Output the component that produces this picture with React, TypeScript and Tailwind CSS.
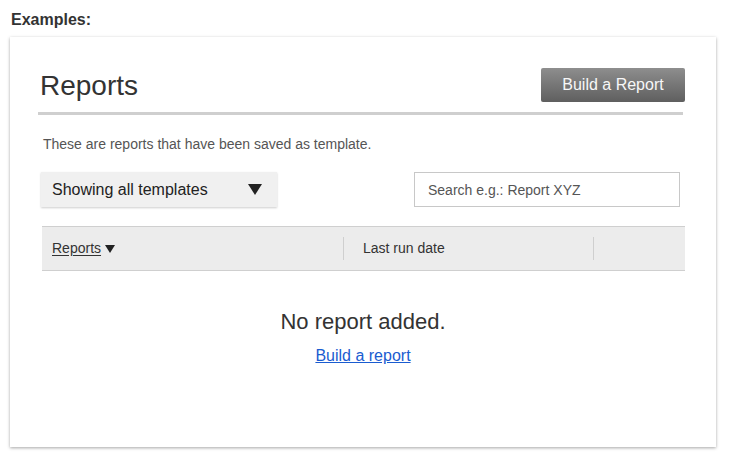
import React from "react";

export default function App() {
  return (
    <div
      className="w-[734px] h-[461px] bg-white px-[10px] pt-[11px] text-[#333]"
      style={{ fontFamily: '"Liberation Sans", Arial, sans-serif' }}
    >
      <div className="ml-[1px] text-[16px] leading-[18px] font-bold text-[#333]">Examples:</div>
      <div className="mt-[8px] w-[706px] h-[410px] bg-white shadow-[0_1px_3px_rgba(0,0,0,0.35)] px-[31px] pt-[31px]">
        <div className="flex items-start justify-between">
          <h1 className="-ml-[1px] text-[28px] leading-[35px] font-normal text-[#333]">Reports</h1>
          <button className="w-[144px] h-[34px] rounded-[2px] bg-gradient-to-b from-[#8e8e8e] to-[#5f5f5f] text-[16px] text-[#f7f7f7]">
            Build a Report
          </button>
        </div>
        <div className="mt-[9px] -ml-[3px] w-[645px] h-[3px] bg-[#cfcfcf]" />
        <p className="mt-[21px] ml-[2px] text-[14px] leading-[17px] text-[#555]">
          These are reports that have been saved as template.
        </p>
        <div className="mt-[19px] flex items-start justify-between">
          <div className="w-[236px] h-[35px] bg-[#f0f0f0] shadow-[0_1px_2px_rgba(0,0,0,0.2)] flex items-center justify-between pl-[11px] pr-[15px]">
            <span className="text-[16px] text-[#222]">Showing all templates</span>
            <svg width="14" height="11" viewBox="0 0 14 11">
              <polygon points="0,0 14,0 7,11" fill="#222" />
            </svg>
          </div>
          <input
            className="mr-[5px] w-[266px] h-[35px] border border-[#c8c8c8] bg-white pl-[13px] text-[14px] text-[#333] placeholder:text-[#555] outline-none"
            placeholder="Search e.g.: Report XYZ"
          />
        </div>
        <div className="mt-[19px] ml-[1px] h-[45px] bg-[#ececec] border-t border-b border-[#cfcfcf] flex items-center text-[14px] text-[#333]">
          <div className="w-[301px] pl-[10px] flex items-center">
            <span className="underline underline-offset-2">Reports</span>
            <svg className="ml-[4px]" width="10" height="8" viewBox="0 0 10 8">
              <polygon points="0,0 10,0 5,8" fill="#222" />
            </svg>
          </div>
          <div className="w-px h-[23px] bg-[#cfcfcf]" />
          <div className="w-[249px] pl-[19px]">Last run date</div>
          <div className="w-px h-[23px] bg-[#cfcfcf]" />
          <div className="flex-1" />
        </div>
        <div className="flex flex-col items-center">
          <div className="mt-[38px] text-[22px] leading-[25px] text-[#333]">No report added.</div>
          <a href="#" className="mt-[13px] text-[16px] leading-[18px] text-[#1a5cd0] underline">
            Build a report
          </a>
        </div>
      </div>
    </div>
  );
}
